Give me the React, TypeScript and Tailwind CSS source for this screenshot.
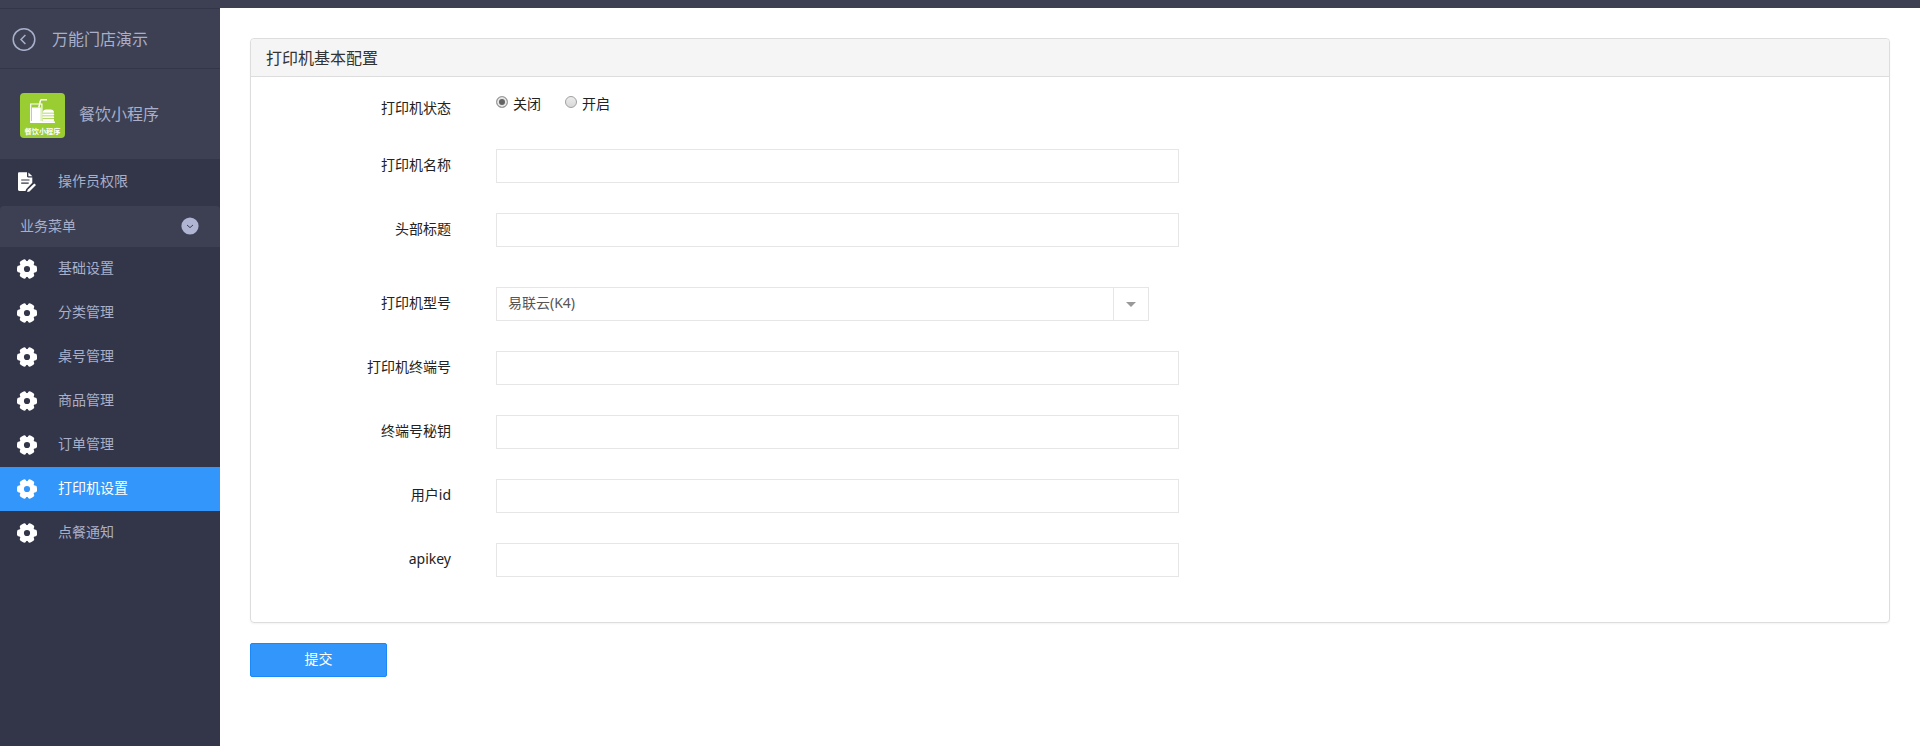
import { useState } from "react";

const menuItems = [
  "基础设置",
  "分类管理",
  "桌号管理",
  "商品管理",
  "订单管理",
  "打印机设置",
  "点餐通知",
];

function BackIcon() {
  return (
    <svg className="h-6 w-6" viewBox="0 0 24 24" fill="none" stroke="currentColor" strokeWidth="1.5">
      <circle cx="12" cy="12.5" r="10.8" />
      <path d="M13.4 8L9 12.500l4.400 4.500" />
    </svg>
  );
}

function LogoIcon() {
  return (
    <svg className="h-[45px] w-[45px] rounded" viewBox="0 0 45 45">
      <rect width="45" height="45" fill="#9acd32" />
      <path d="M10.7 11h11.2v17.5H10.7z" fill="none" stroke="#fff" strokeWidth="1.2" />
      <path d="M12 14.5h8.8V28.6H12z" fill="#fff" />
      <path d="M18.800 14.500l1.600-6.800c.1-.7.5-1 1.100-1H27" fill="none" stroke="#fff" strokeWidth="1.500" />
      <path d="M22.800 19.800c0-2.200 1.400-3.300 3.400-3.300h4.400c2 0 3.400 1.100 3.400 3.300z" fill="#fff" />
      <rect x="22.400" y="20.600" width="11.800" height="1.900" rx=".9" fill="#fff" />
      <rect x="22.400" y="23.300" width="11.800" height="1.900" rx=".9" fill="#fff" />
      <path d="M22.800 26h11.200v1.200c0 .9-.6 1.400-1.400 1.400h-8.400c-.8 0-1.400-.5-1.400-1.400z" fill="#fff" />
      <rect x="10" y="28.300" width="25" height="1.800" rx=".9" fill="#fff" />
      <text x="22.5" y="40.6" fontSize="7.2" fontWeight="700" textAnchor="middle" fill="#fff">
        餐饮小程序
      </text>
    </svg>
  );
}

function DocIcon() {
  return (
    <svg className="h-5 w-5" viewBox="0 0 20 20">
      <path
        d="M2.400.3H10v3.900c0 .7.5 1.200 1.200 1.200h4.100v5.300l-6 6.300-.8 2H2.400C1.500 19 1 18.500 1 17.600V1.700C1 .8 1.500.3 2.400.3z"
        fill="#fff"
      />
      <path d="M11.400.5l4 3.700h-4z" fill="#fff" />
      <path d="M4.200 8h8.300M4.200 11.100h7.500" stroke="#323648" strokeWidth="1.100" />
      <path d="M17.300 11.600l1.700 1.500-6.500 6.300-2.400.6.600-2.300z" fill="#fff" />
    </svg>
  );
}

function GearIcon() {
  return (
    <svg className="h-5 w-5" viewBox="0 0 20 20">
      <circle cx="10" cy="10" r="5.6" fill="none" stroke="#fff" strokeWidth="5" />
      <g fill="#fff">
        <rect x="0" y="6.600" width="6" height="6.800" rx="2.200" />
        <rect x="0" y="6.600" width="6" height="6.800" rx="2.200" transform="rotate(60 10 10)" />
        <rect x="0" y="6.600" width="6" height="6.800" rx="2.200" transform="rotate(120 10 10)" />
        <rect x="0" y="6.600" width="6" height="6.800" rx="2.200" transform="rotate(180 10 10)" />
        <rect x="0" y="6.600" width="6" height="6.800" rx="2.200" transform="rotate(240 10 10)" />
        <rect x="0" y="6.600" width="6" height="6.800" rx="2.200" transform="rotate(300 10 10)" />
      </g>
    </svg>
  );
}

function CollapseIcon() {
  return (
    <svg className="h-[18px] w-[18px]" viewBox="0 0 18 18">
      <circle cx="9" cy="9" r="8.600" fill="#afb5d2" />
      <path d="M6 8l3 2.600L12 8" fill="none" stroke="#3c4052" strokeWidth="1" />
    </svg>
  );
}

function Sidebar() {
  const [active, setActive] = useState("打印机设置");
  const [open, setOpen] = useState(true);

  return (
    <aside className="w-[220px] shrink-0 bg-[#323648] text-[#a9afca]">
      <a
        href="#"
        className="flex h-[61px] items-center gap-4 border-y border-[#323648] bg-[#3c4052] pl-3 text-base"
      >
        <BackIcon />
        万能门店演示
      </a>
      <div className="flex h-[90px] items-center gap-[14px] bg-[#3c4052] pt-[2px] pl-5 text-base">
        <LogoIcon />
        <span className="pb-[2px]">餐饮小程序</span>
      </div>
      <nav className="text-sm">
        <a href="#" className="flex h-[47px] items-center gap-[21px] pb-[2px] pl-[17px]">
          <DocIcon />
          <span className="pb-[2px]">操作员权限</span>
        </a>
        <button
          type="button"
          onClick={() => setOpen(!open)}
          className="flex h-[41px] w-full items-center justify-between rounded-t bg-[#3c4052] pr-[21px] pb-[2px] pl-5"
        >
          业务菜单
          <CollapseIcon />
        </button>
        {open &&
          menuItems.map((item) => (
            <a
              key={item}
              href="#"
              onClick={() => setActive(item)}
              className={
                item === active
                  ? "flex h-11 items-center gap-[21px] bg-[#3296fa] pl-[17px] text-white"
                  : "flex h-11 items-center gap-[21px] pl-[17px]"
              }
            >
              <GearIcon />
              <span className="pb-[2px]">{item}</span>
            </a>
          ))}
      </nav>
    </aside>
  );
}

const labelClass = "mr-[45px] w-[200px] shrink-0 text-right";
const inputClass = "block h-[34px] w-full border border-[#e6e6e6] bg-white px-[11px] outline-none";
const radioClass =
  "mt-[2px] h-3 w-3 appearance-none rounded-full border border-[#a0a0a0] bg-linear-to-b from-[#ececec] to-[#d8d8d8] checked:bg-none checked:bg-[#636363] checked:shadow-[inset_0_0_0_2px_#e6e6e6]";

function TextField({ id, label }: { id: string; label: string }) {
  return (
    <div className="mb-[30px] flex items-center">
      <label htmlFor={id} className={`${labelClass} pb-[2px]`}>
        {label}
      </label>
      <div className="w-5/12">
        <input id={id} type="text" className={inputClass} />
      </div>
    </div>
  );
}

export default function App() {
  return (
    <div className="flex min-h-screen flex-col bg-white font-['Noto_Sans','Noto_Sans_CJK_SC',sans-serif] text-sm text-[#222]">
      <header className="h-2 bg-[#3c4052]" />
      <div className="flex flex-1">
        <Sidebar />
        <main className="min-w-0 flex-1 px-[30px] pt-[30px]">
          <form onSubmit={(e) => e.preventDefault()}>
            <section className="rounded border border-[#ddd] shadow-xs">
              <h1 className="flex h-[38px] items-center rounded-t border-b border-[#ddd] bg-[#f5f5f5] px-[15px] text-base text-[#333]">
                打印机基本配置
              </h1>
              <div className="py-[15px]">
                <div role="radiogroup" aria-labelledby="status" className="mb-[30px] flex items-start">
                  <span id="status" className={`${labelClass} pt-[6px] pb-px`}>
                    打印机状态
                  </span>
                  <div className="flex gap-6 pt-[2px]">
                    <label className="flex items-start gap-[5px]">
                      <input type="radio" name="status" value="0" defaultChecked className={radioClass} />
                      关闭
                    </label>
                    <label className="flex items-start gap-[5px]">
                      <input type="radio" name="status" value="1" className={radioClass} />
                      开启
                    </label>
                  </div>
                </div>

                <TextField id="name" label="打印机名称" />
                <TextField id="title" label="头部标题" />

                <div className="mt-10 mb-[30px] flex items-center">
                  <label htmlFor="model" className={`${labelClass} pb-[2px]`}>
                    打印机型号
                  </label>
                  <div className="w-5/12 pr-[30px]">
                    <div className="relative">
                      <select id="model" className={`${inputClass} appearance-none pb-[2px] text-[#555]`}>
                        <option>易联云(K4)</option>
                      </select>
                      <span className="pointer-events-none absolute inset-y-0 right-0 flex w-9 items-center justify-center border-l border-[#e6e6e6]">
                        <svg className="h-[5px] w-[10px]" viewBox="0 0 10 5">
                          <path d="M0 0h10L5 5z" fill="#999" />
                        </svg>
                      </span>
                    </div>
                  </div>
                </div>

                <TextField id="terminal" label="打印机终端号" />
                <TextField id="secret" label="终端号秘钥" />
                <TextField id="uid" label="用户id" />
                <TextField id="apikey" label="apikey" />
              </div>
            </section>
            <button
              type="submit"
              className="mt-5 h-[34px] w-[137px] rounded-xs border border-[#1a88f8] bg-[#3296fa] pb-[2px] text-white"
            >
              提交
            </button>
          </form>
        </main>
      </div>
    </div>
  );
}
